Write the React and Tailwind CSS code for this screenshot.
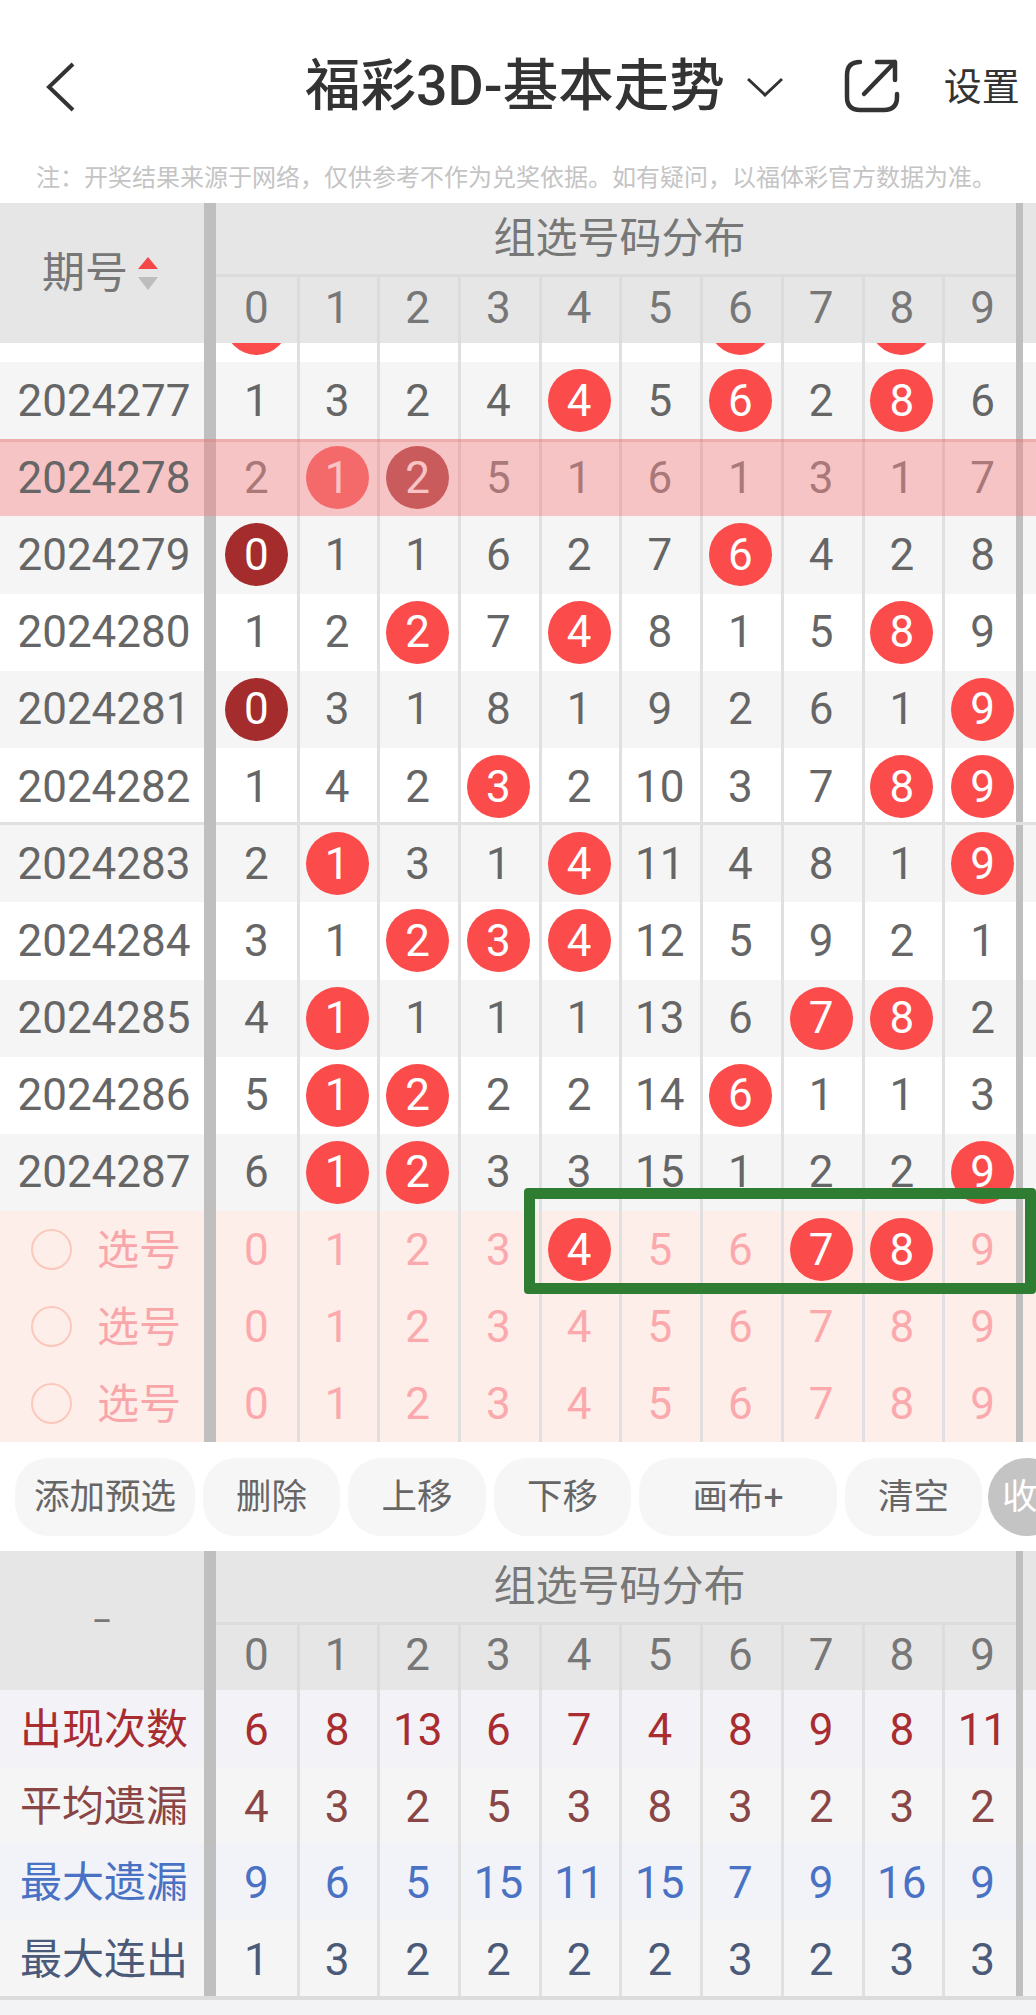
import React from 'react';

// 一行10个号码的数据，hit是红球所在列，dark是深红球所在列
const rows = [
  { no: '2024277', nums: [1, 3, 2, 4, 4, 5, 6, 2, 8, 6], hit: [4, 6, 8], bg: 'bg-[#f5f5f5]' },
  { no: '2024278', nums: [2, 1, 2, 5, 1, 6, 1, 3, 1, 7], hit: [1], dark: [2], bg: 'bg-white', mark: true },
  { no: '2024279', nums: [0, 1, 1, 6, 2, 7, 6, 4, 2, 8], hit: [6], dark: [0], bg: 'bg-[#f5f5f5]' },
  { no: '2024280', nums: [1, 2, 2, 7, 4, 8, 1, 5, 8, 9], hit: [2, 4, 8], bg: 'bg-white' },
  { no: '2024281', nums: [0, 3, 1, 8, 1, 9, 2, 6, 1, 9], hit: [9], dark: [0], bg: 'bg-[#f5f5f5]' },
  { no: '2024282', nums: [1, 4, 2, 3, 2, 10, 3, 7, 8, 9], hit: [3, 8, 9], bg: 'bg-white', line: true },
  { no: '2024283', nums: [2, 1, 3, 1, 4, 11, 4, 8, 1, 9], hit: [1, 4, 9], bg: 'bg-[#f5f5f5]' },
  { no: '2024284', nums: [3, 1, 2, 3, 4, 12, 5, 9, 2, 1], hit: [2, 3, 4], bg: 'bg-white' },
  { no: '2024285', nums: [4, 1, 1, 1, 1, 13, 6, 7, 8, 2], hit: [1, 7, 8], bg: 'bg-[#f5f5f5]' },
  { no: '2024286', nums: [5, 1, 2, 2, 2, 14, 6, 1, 1, 3], hit: [1, 2, 6], bg: 'bg-white' },
  { no: '2024287', nums: [6, 1, 2, 3, 3, 15, 1, 2, 2, 9], hit: [1, 2, 9], bg: 'bg-[#f5f5f5]' },
];

const stats = [
  { label: '出现次数', nums: [6, 8, 13, 6, 7, 4, 8, 9, 8, 11], color: 'text-[#a82c30]', bg: 'bg-[#f2f2f7]' },
  { label: '平均遗漏', nums: [4, 3, 2, 5, 3, 8, 3, 2, 3, 2], color: 'text-[#8a4545]', bg: 'bg-[#f5f5f6]' },
  { label: '最大遗漏', nums: [9, 6, 5, 15, 11, 15, 7, 9, 16, 9], color: 'text-[#4a72c4]', bg: 'bg-[#f2f3f8]' },
  { label: '最大连出', nums: [1, 3, 2, 2, 2, 2, 3, 2, 3, 3], color: 'text-[#4b5a78]', bg: 'bg-[#f5f5f5]' },
];

const digits = [0, 1, 2, 3, 4, 5, 6, 7, 8, 9];
const buttons = [
  { text: '添加预选', w: 'w-[180px]' },
  { text: '删除', w: 'w-[137px]' },
  { text: '上移', w: 'w-[138px]' },
  { text: '下移', w: 'w-[137px]' },
  { text: '画布+', w: 'w-[198px]' },
  { text: '清空', w: 'w-[137px]' },
];

// 分隔线用内阴影画，数字不会偏移
const cellLine = (i) => {
  if (i === 0) return '';
  if (i === 9) return 'shadow-[inset_3px_0_0_#e0e0e0,inset_-7px_0_0_#bfbfbf]';
  return 'shadow-[inset_3px_0_0_#e0e0e0]';
};

const headLine = (i) => {
  if (i === 0) return '';
  if (i === 9) return 'shadow-[inset_3px_0_0_#dcdcdc,inset_-7px_0_0_#bfbfbf]';
  return 'shadow-[inset_3px_0_0_#dcdcdc]';
};

const Ball = ({ value, dark }) => (
  <span className={`flex h-[63px] w-[63px] shrink-0 items-center justify-center rounded-full text-white ${dark ? 'bg-[#a52c2c]' : 'bg-[#fb4b4b]'}`}>
    {value}
  </span>
);

const Cell = ({ i, children, className }) => (
  <div className={`flex w-[80.7px] shrink-0 items-center justify-center ${className || cellLine(i)}`}>{children}</div>
);

const Bar = () => <div className="relative z-10 w-[12px] shrink-0 self-stretch bg-[#bfbfbf]" />;

const DataRow = ({ row }) => (
  <div className={`relative flex h-[77.2px] text-[44px] leading-none text-[#666666] ${row.bg}`}>
    <div className="relative z-30 flex w-[204px] shrink-0 items-center justify-center pl-[4px]">{row.no}</div>
    <Bar />
    {row.nums.map((n, i) => {
      const isDark = row.dark && row.dark.includes(i);
      return (
        <Cell key={i} i={i}>
          {isDark || row.hit.includes(i) ? <Ball value={n} dark={isDark} /> : n}
        </Cell>
      );
    })}
    {row.line && <div className="absolute bottom-0 left-0 right-0 h-[3px] bg-[#e0e0e0]" />}
    {row.mark && (
      <div className="absolute inset-0 z-20 border-t-[3px] border-[rgba(214,120,120,0.3)] bg-[rgba(237,137,140,0.5)]" />
    )}
  </div>
);

const SelectRow = ({ balls = [] }) => (
  <div className="flex h-[77px] bg-[#feeee9] text-[44px] leading-none text-[#fba9ac]">
    <div className="flex w-[204px] shrink-0 items-center">
      <span className="ml-[31px] h-[41px] w-[41px] rounded-full border-2 border-[#fbc8bc]" />
      <span className="ml-[25px] pt-[3px] text-[42px] text-[#f9a6aa]">选号</span>
    </div>
    <Bar />
    {digits.map((d) => (
      <Cell key={d} i={d}>
        {balls.includes(d) ? <Ball value={d} /> : d}
      </Cell>
    ))}
  </div>
);

const TableHead = ({ left, digitHeight }) => (
  <div className="flex bg-[#e6e6e6] text-[#777777]">
    <div className="flex w-[204px] shrink-0 items-center justify-center">{left}</div>
    <Bar />
    <div className="w-[807px] shrink-0">
      <div className="flex h-[71px] items-center justify-center text-[42px] leading-none shadow-[inset_-7px_0_0_#bfbfbf]">组选号码分布</div>
      <div className="h-[3px] bg-[#dcdcdc] shadow-[inset_-7px_0_0_#bfbfbf]" />
      <div className={`flex ${digitHeight} text-[44px] leading-none`}>
        {digits.map((d) => (
          <Cell key={d} i={d} className={headLine(d)}>
            <span className="pb-[5px]">{d}</span>
          </Cell>
        ))}
      </div>
    </div>
  </div>
);

export default function App() {
  return (
    <div className="relative h-[2015px] w-[1036px] overflow-hidden bg-white font-['Roboto','Noto_Sans_CJK_SC',sans-serif]">
      {/* 顶部导航 */}
      <div className="flex h-[150px] items-center pt-[24px] text-[#333333]">
        <svg className="ml-[46px] shrink-0" width="30" height="50" viewBox="0 0 30 50" fill="none" stroke="#333333" strokeWidth="4">
          <path d="M27 2 L3 25 L27 48" />
        </svg>
        <div className="ml-[229px] whitespace-nowrap text-[55.5px] font-medium leading-none">福彩3D-基本走势</div>
        <svg className="ml-[22px] shrink-0" width="36" height="20" viewBox="0 0 36 20" fill="none" stroke="#333333" strokeWidth="3">
          <path d="M1 2 L18 18 L35 2" />
        </svg>
        <svg className="ml-[49px] shrink-0" width="80" height="80" viewBox="0 0 80 80" fill="none" stroke="#333333" strokeWidth="4.5" strokeLinecap="round" strokeLinejoin="round">
          <path d="M28 15 Q15 15 15 28 L15 50 Q15 63 28 63 L52 63 Q65 63 65 50 L65 47" />
          <path d="M32 47 L63 15 M45 15 L63 15 L63 33" />
        </svg>
        <div className="ml-[32px] whitespace-nowrap text-[38px] leading-none">设置</div>
      </div>
      <div className="flex h-[53px] items-center whitespace-nowrap pl-[36px] pt-[3px] text-[24px] leading-none text-[#c4c4c4]">
        注：开奖结果来源于网络，仅供参考不作为兑奖依据。如有疑问，以福体彩官方数据为准。
      </div>

      {/* 走势表 */}
      <TableHead
        digitHeight="h-[66px]"
        left={
          <div className="flex items-center gap-[10px] pr-[4px]">
            <span className="text-[43px] leading-none">期号</span>
            <div className="flex flex-col gap-[8px]">
              <span className="h-0 w-0 border-x-[10px] border-b-[12px] border-x-transparent border-b-[#f44848]" />
              <span className="h-0 w-0 border-x-[10px] border-t-[13px] border-x-transparent border-t-[#bdbdbd]" />
            </div>
          </div>
        }
      />
      {/* 上一期只露出球的下半部分 */}
      <div className="flex h-[19px] items-end overflow-hidden bg-white text-[44px] leading-none">
        <div className="w-[204px] shrink-0" />
        <Bar />
        {digits.map((d) => (
          <div key={d} className={`flex h-[19px] w-[80.7px] shrink-0 justify-center ${cellLine(d)}`}>
            {[0, 6, 8].includes(d) && <span className="mt-[-51px] block h-[63px] w-[63px] shrink-0 rounded-full bg-[#fb4b4b]" />}
          </div>
        ))}
      </div>
      {rows.map((row) => (
        <DataRow key={row.no} row={row} />
      ))}
      <SelectRow balls={[4, 7, 8]} />
      <SelectRow />
      <SelectRow />

      {/* 操作按钮 */}
      <div className="flex h-[109px] items-center gap-[8px] pl-[15px] text-[35.5px] leading-none text-[#666666]">
        {buttons.map((b) => (
          <div key={b.text} className={`flex h-[78px] shrink-0 items-center justify-center rounded-[33px] bg-[#f6f6f6] pt-[2px] ${b.w}`}>
            {b.text}
          </div>
        ))}
        <div className="ml-[-2px] flex h-[78px] w-[78px] shrink-0 items-center rounded-full bg-[#c4c4c4] pl-[14px] pt-[2px] text-white">
          <span className="shrink-0">收</span>
        </div>
      </div>

      {/* 统计表 */}
      <TableHead digitHeight="h-[65px]" left={<span className="text-[30px] font-medium leading-none">–</span>} />
      {stats.map((s) => (
        <div key={s.label} className={`flex h-[76.5px] leading-none ${s.bg} ${s.color}`}>
          <div className="flex w-[204px] shrink-0 items-center justify-center pl-[4px] pt-[4px] text-[42px]">{s.label}</div>
          <Bar />
          {s.nums.map((n, i) => (
            <Cell key={i} i={i}>
              <span className="pt-[4px] text-[44px]">{n}</span>
            </Cell>
          ))}
        </div>
      ))}
      <div className="h-[4px] bg-[#dcdcdc]" />
      <div className="h-[15px] bg-[#f3f3f6]" />

      {/* 绿色标注框 */}
      <div className="absolute left-[524px] top-[1188px] z-30 h-[106px] w-[512px] rounded-[4px] border-[11.5px] border-[#2e7d32]" />
    </div>
  );
}
